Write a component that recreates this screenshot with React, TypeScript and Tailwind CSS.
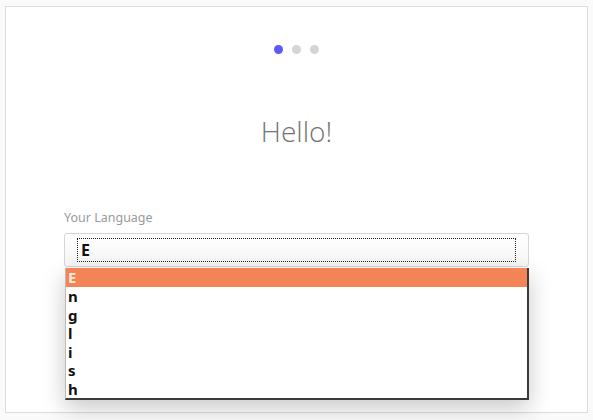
const letters = ["E", "n", "g", "l", "i", "s", "h"];

export default function App() {
  return (
    <div className="h-[420px] w-[593px] overflow-hidden bg-[#fafafa] pl-[5px] pt-[6px] font-['Noto_Sans',sans-serif]">
      <div className="relative h-[407px] w-[583px] border border-[#dcdcdc] bg-white px-[58px]">
        <div className="flex justify-center gap-[9px] pt-[38px] pr-[1px]">
          <span className="h-[9px] w-[9px] rounded-full bg-[#5a5af6]" />
          <span className="h-[9px] w-[9px] rounded-full bg-[#d3d5d6]" />
          <span className="h-[9px] w-[9px] rounded-full bg-[#d3d5d6]" />
        </div>
        <h1 className="mt-[59px] text-center font-['Open_Sans',sans-serif] text-[28px] font-light leading-[36px] text-[#747474]">
          Hello!
        </h1>
        <div className="mt-[60px] text-[12.5px] leading-[17px] text-[#9a9a9a]">Your Language</div>
        <div className="mt-[7px] flex h-[34px] w-[465px] items-center rounded-[3px] border border-[#d6d6d6] bg-gradient-to-b from-white to-[#f6f6f6] px-[12px]">
          <div className="flex h-[24px] w-full items-center border border-dotted border-[#222] pl-[3px] text-[16px] font-bold text-[#111]">
            E
          </div>
        </div>
        <div className="ml-[1px] mt-[1px] w-[464px] border-b-[2px] border-l border-r-[2px] border-b-[#3a3a3a] border-l-[#bbb] border-r-[#3a3a3a] bg-white shadow-[0_8px_22px_rgba(0,0,0,0.22)]">
          {letters.map((ch, i) => (
            <div
              key={i}
              className={
                i === 0
                  ? "h-[19px] bg-[#f28456] pl-[2px] text-[15px] font-bold leading-[19px] text-[#fde9d9]"
                  : "h-[18.5px] pl-[2px] text-[15px] font-bold leading-[18px] text-[#111]"
              }
            >
              {ch}
            </div>
          ))}
        </div>
      </div>
    </div>
  );
}
